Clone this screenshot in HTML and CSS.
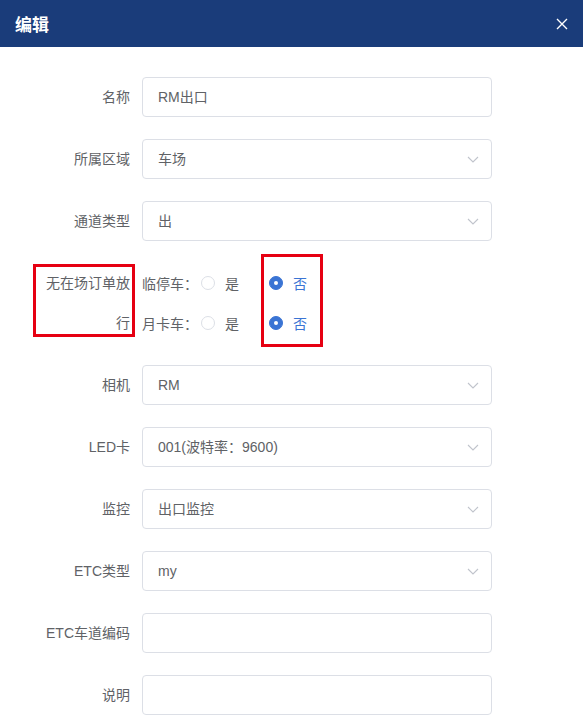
FILE: index.html
```html
<!DOCTYPE html>
<html lang="zh-CN">
<head>
<meta charset="utf-8">
<title>编辑</title>
<link rel="stylesheet" href="styles.css">
</head>
<body>
<div class="dialog">
  <div class="header">
    <span class="title">编辑</span>
    <svg class="close" width="12" height="12" viewBox="0 0 12 12"><path d="M1 1L11 11M11 1L1 11" stroke="#fff" stroke-width="1.4" fill="none"/></svg>
  </div>
  <div class="body">
    <form class="form">
      <div class="item">
        <label class="label">名称</label>
        <div class="control"><div class="input">RM出口</div></div>
      </div>
      <div class="item">
        <label class="label">所属区域</label>
        <div class="control"><div class="input select">车场<svg class="arrow" width="12" height="7" viewBox="0 0 12 7"><path d="M1 1L6 6L11 1" stroke="#c0c4cc" stroke-width="1.1" fill="none"/></svg></div></div>
      </div>
      <div class="item">
        <label class="label">通道类型</label>
        <div class="control"><div class="input select">出<svg class="arrow" width="12" height="7" viewBox="0 0 12 7"><path d="M1 1L6 6L11 1" stroke="#c0c4cc" stroke-width="1.1" fill="none"/></svg></div></div>
      </div>
      <div class="item">
        <label class="label">无在场订单放行</label>
        <div class="control">
          <div class="radio-row">
            <span class="sub">临停车：</span>
            <span class="radio"><span class="circle"></span><span class="rlabel">是</span></span>
            <span class="radio checked"><span class="circle"></span><span class="rlabel">否</span></span>
          </div>
          <div class="radio-row">
            <span class="sub">月卡车：</span>
            <span class="radio"><span class="circle"></span><span class="rlabel">是</span></span>
            <span class="radio checked"><span class="circle"></span><span class="rlabel">否</span></span>
          </div>
        </div>
        <div class="mark mark-left"></div>
        <div class="mark mark-right"></div>
      </div>
      <div class="item">
        <label class="label">相机</label>
        <div class="control"><div class="input select">RM<svg class="arrow" width="12" height="7" viewBox="0 0 12 7"><path d="M1 1L6 6L11 1" stroke="#c0c4cc" stroke-width="1.1" fill="none"/></svg></div></div>
      </div>
      <div class="item">
        <label class="label">LED卡</label>
        <div class="control"><div class="input select">001(波特率：9600)<svg class="arrow" width="12" height="7" viewBox="0 0 12 7"><path d="M1 1L6 6L11 1" stroke="#c0c4cc" stroke-width="1.1" fill="none"/></svg></div></div>
      </div>
      <div class="item">
        <label class="label">监控</label>
        <div class="control"><div class="input select">出口监控<svg class="arrow" width="12" height="7" viewBox="0 0 12 7"><path d="M1 1L6 6L11 1" stroke="#c0c4cc" stroke-width="1.1" fill="none"/></svg></div></div>
      </div>
      <div class="item">
        <label class="label">ETC类型</label>
        <div class="control"><div class="input select">my<svg class="arrow" width="12" height="7" viewBox="0 0 12 7"><path d="M1 1L6 6L11 1" stroke="#c0c4cc" stroke-width="1.1" fill="none"/></svg></div></div>
      </div>
      <div class="item">
        <label class="label">ETC车道编码</label>
        <div class="control"><div class="input"></div></div>
      </div>
      <div class="item">
        <label class="label">说明</label>
        <div class="control"><div class="input"></div></div>
      </div>
    </form>
  </div>
</div>
</body>
</html>
```

FILE: styles.css
```css
* { box-sizing: border-box; }
html, body { margin: 0; padding: 0; background: #fff; }
body {
  font-family: "Liberation Sans", "Noto Sans CJK SC", sans-serif;
  font-size: 14px;
  color: #606266;
  overflow: hidden;
}
.dialog { width: 583px; }
.header {
  height: 47px;
  background: #1a3c7a;
  display: flex;
  align-items: center;
  justify-content: space-between;
  padding: 0 15px 0 15px;
}
.title {
  color: #fff;
  font-size: 17px;
  font-weight: bold;
}
.close { display: block; }
.body { padding: 30px 0 0 0; }
.form { display: flex; flex-direction: column; gap: 22px; padding-left: 40px; width: 492px; }
.item { display: flex; position: relative; }
.label {
  width: 102px;
  flex: none;
  padding-right: 12px;
  text-align: right;
  line-height: 40px;
  font-size: 14px;
  color: #606266;
  word-break: break-all;
}
.control { flex: 1; }
.input {
  height: 40px;
  border: 1px solid #dcdfe6;
  border-radius: 4px;
  padding: 0 15px;
  line-height: 38px;
  color: #606266;
  position: relative;
}
.select .arrow { position: absolute; right: 12px; top: 16px; }
.radio-row { display: flex; align-items: center; height: 40px; }
.sub { width: 59px; }
.radio { display: flex; align-items: center; margin-right: 30px; }
.circle {
  width: 14px; height: 14px;
  border: 1px solid #dcdfe6;
  border-radius: 50%;
  background: #fff;
  position: relative;
}
.rlabel { padding-left: 10px; }
.checked .circle { border-color: #3a74d4; background: #3a74d4; }
.checked .circle::after {
  content: "";
  position: absolute;
  width: 4px; height: 4px;
  border-radius: 50%;
  background: #fff;
  left: 4px; top: 4px;
}
.checked .rlabel { color: #3a74d4; }
.mark { position: absolute; border: 3px solid #e60012; }
.mark-left { left: -7px; top: 1px; width: 102px; height: 73px; }
.mark-right { left: 221px; top: -9px; width: 62px; height: 93px; }
```
